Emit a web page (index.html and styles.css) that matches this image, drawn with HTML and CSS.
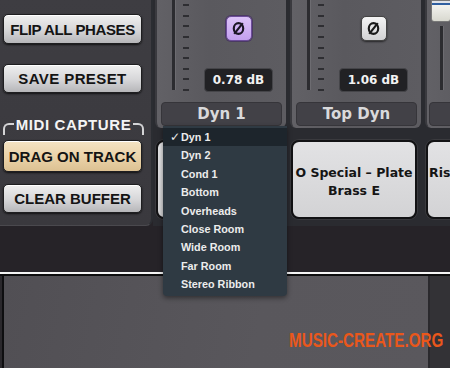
FILE: index.html
```html
<!DOCTYPE html>
<html>
<head>
<meta charset="utf-8">
<link rel="stylesheet" href="styles.css">
</head>
<body>
<div class="app">
  <div class="upper">
    <aside class="side">
      <div class="btn btn-flip">FLIP ALL PHASES</div>
      <div class="btn btn-save">SAVE PRESET</div>
      <div class="legend"><span class="lline lline-l"></span><span class="ltext">MIDI CAPTURE</span><span class="lline lline-r"></span></div>
      <div class="btn btn-drag">DRAG ON TRACK</div>
      <div class="btn btn-clear">CLEAR BUFFER</div>
    </aside>
    <div class="rack">
      <div class="strip">
        <div class="chan">
          <div class="chan-top">
            <div class="fader">
              <div class="track"></div>
              <div class="ticks"><i></i><i></i><i></i><i></i><i></i><i></i><i></i><i></i><i></i></div>
            </div>
            <div class="ctrls">
              <div class="phase phase-on"><svg viewBox="0 0 14 14" width="15" height="15"><ellipse cx="7" cy="7" rx="4.4" ry="5" fill="none" stroke="#1c1626" stroke-width="2"/><line x1="3" y1="12" x2="11" y2="2" stroke="#1c1626" stroke-width="2"/></svg></div>
              <div class="value">0.78 dB</div>
            </div>
          </div>
          <div class="name">Dyn 1</div>
        </div>
        <div class="card"></div>
      </div>
      <div class="strip">
        <div class="chan">
          <div class="chan-top">
            <div class="fader">
              <div class="track"></div>
              <div class="ticks"><i></i><i></i><i></i><i></i><i></i><i></i><i></i><i></i><i></i></div>
            </div>
            <div class="ctrls">
              <div class="phase phase-off"><svg viewBox="0 0 14 14" width="15" height="15"><ellipse cx="7" cy="7" rx="4.4" ry="5" fill="none" stroke="#1a1a1a" stroke-width="2"/><line x1="3" y1="12" x2="11" y2="2" stroke="#1a1a1a" stroke-width="2"/></svg></div>
              <div class="value">1.06 dB</div>
            </div>
          </div>
          <div class="name">Top Dyn</div>
        </div>
        <div class="card"><div class="card-text">O Special – Plate<br>Brass E</div></div>
      </div>
      <div class="strip">
        <div class="chan">
          <div class="chan-top">
            <div class="fader fader-3">
              <div class="track track-3"></div>
              <div class="knob"></div>
            </div>
          </div>
          <div class="name name-3"></div>
        </div>
        <div class="card"><div class="card-text card-text-3">Risi</div></div>
      </div>
    </div>
  </div>
  <div class="rule"></div>
  <div class="lower">
    <div class="edge"></div>
    <div class="pane"></div>
    <div class="rest"></div>
  </div>
</div>

<ul class="menu">
  <li class="sel"><span class="chk">✓</span>Dyn 1</li>
  <li>Dyn 2</li>
  <li>Cond 1</li>
  <li>Bottom</li>
  <li>Overheads</li>
  <li>Close Room</li>
  <li>Wide Room</li>
  <li>Far Room</li>
  <li>Stereo Ribbon</li>
</ul>

<div class="watermark">MUSIC-CREATE.ORG</div>
</body>
</html>
```

FILE: styles.css
```css
* { box-sizing: border-box; }
html, body { margin: 0; padding: 0; }
body {
  width: 450px;
  height: 368px;
  overflow: hidden;
  background: #262328;
  font-family: "Liberation Sans", Arial, sans-serif;
  position: relative;
}
.app { width: 450px; height: 368px; display: flex; flex-direction: column; }
.upper { height: 272px; display: flex; background: #262328; }

/* left side panel */
.side {
  width: 153px;
  height: 226px;
  flex: none;
  background: linear-gradient(#3e3d42, #3a393e);
  border-radius: 0 0 7px 0;
  border-right: 2px solid #2b2d32;
  border-bottom: 1px solid #4a494e;
  padding: 14px 0 0 3px;
  display: flex;
  flex-direction: column;
}
.btn {
  width: 139px;
  height: 30px;
  border: 1px solid #1e1e20;
  border-radius: 5px;
  background: linear-gradient(#efefef, #d6d6d8 55%, #b6b6b9);
  box-shadow: inset 0 1px 0 #fff, 0 1px 2px rgba(0,0,0,.7);
  color: #141414;
  font-weight: bold;
  font-size: 15px;
  display: flex;
  align-items: center;
  justify-content: center;
  white-space: nowrap;
}
.btn-flip { letter-spacing: -0.4px; }
.btn-save { margin-top: 20px; height: 29px; letter-spacing: 0.4px; }
.btn-drag {
  margin-top: 7px;
  height: 32px;
  background: linear-gradient(#f4e3c3, #ead2a8 55%, #dcc192);
}
.btn-clear { margin-top: 12px; height: 29px; }

.legend {
  margin-top: 23px;
  width: 141px;
  height: 17px;
  display: flex;
  align-items: flex-start;
}
.lline {
  flex: 1;
  margin-top: 7px;
  height: 12px;
  border-top: 2px solid #d4d4d6;
}
.lline-l { border-left: 2px solid #d4d4d6; border-top-left-radius: 6px; }
.lline-r { border-right: 2px solid #d4d4d6; border-top-right-radius: 6px; }
.ltext {
  color: #f4f4f4;
  font-weight: bold;
  font-size: 15px;
  letter-spacing: 0.6px;
  line-height: 17px;
  padding: 0 2px;
}

/* channel rack */
.rack {
  flex: 1;
  display: flex;
  gap: 4px;
  padding-left: 2px;
  overflow: hidden;
  background: #2a2b30;
  height: 226px;
}
.strip { width: 131px; flex: none; display: flex; flex-direction: column; }
.chan {
  height: 128px;
  background: linear-gradient(90deg, #626166, #5a595e 40%, #5d5c61);
  border-left: 2px solid #3a3a3f;
  border-radius: 0 0 6px 6px;
  display: flex;
  flex-direction: column;
}
.chan-top { height: 100px; display: flex; }
.fader { width: 34px; display: flex; padding-left: 15px; }
.track {
  width: 3px;
  height: 90px;
  background: #2c2c30;
  box-shadow: 1px 0 0 #6d6c71;
}
.ticks {
  margin-left: 8px;
  padding-top: 4px;
  height: 91px;
  display: flex;
  flex-direction: column;
  justify-content: space-between;
}
.ticks i { display: block; width: 6px; height: 2px; background: #2e2e32; }
.ctrls { width: 95px; display: flex; flex-direction: column; align-items: center; }
.phase {
  margin-top: 16px;
  width: 26px;
  height: 25px;
  border-radius: 5px;
  display: flex;
  align-items: center;
  justify-content: center;
}
.phase-on {
  background: linear-gradient(#dcc3f8, #c3a0ee);
  border: 1px solid #6d4d9a;
  box-shadow: 0 0 0 1px #4a3a62;
}
.phase-off {
  background: linear-gradient(#f4f4f4, #d2d2d4);
  border: 1px solid #444;
  box-shadow: 0 1px 2px rgba(0,0,0,.6);
}
.value {
  margin-top: 27px;
  width: 69px;
  height: 24px;
  border-radius: 4px;
  background: #212124;
  border: 1px solid #454549;
  color: #f2f2f2;
  font-family: "DejaVu Sans", sans-serif;
  font-weight: bold;
  font-size: 12px;
  display: flex;
  align-items: center;
  justify-content: center;
}
.name {
  margin: 2px 4px 0 4px;
  height: 24px;
  border-radius: 4px;
  background: #424147;
  border: 1px solid #36353a;
  color: #d9d9db;
  font-family: "DejaVu Sans", sans-serif;
  font-weight: bold;
  font-size: 15px;
  display: flex;
  align-items: center;
  justify-content: center;
}
.fader-3 { position: relative; padding-left: 13px; }
.track-3 { margin-top: 26px; height: 64px; }
.knob {
  position: absolute;
  left: 4px;
  top: 0;
  width: 20px;
  height: 22px;
  border-radius: 0 0 3px 3px;
  background: linear-gradient(#dfe2e8 0, #dfe2e8 2px, #2f5fa0 2px, #2f5fa0 4px, #f2f2ee 4px, #d8d8cf);
  border: 1px solid #777;
}
.name-3 { margin-left: 2px; }

.card {
  margin: 12px 0 0 1px;
  width: 126px;
  height: 79px;
  border-radius: 8px;
  background: linear-gradient(#e2e2e4, #d3d3d5);
  border: 2px solid #121214;
  box-shadow: 0 0 0 1px #3a3a3e;
  overflow: hidden;
  display: flex;
  align-items: center;
  justify-content: center;
}
.card-text {
  color: #151515;
  font-family: "DejaVu Sans", sans-serif;
  font-weight: bold;
  font-size: 12.5px;
  line-height: 18px;
  text-align: center;
  white-space: nowrap;
  margin-top: 4px;
}
.card-text-3 { align-self: center; margin-right: auto; margin-left: 1px; margin-top: -14px; }

/* divider and lower area */
.rule { height: 4px; background: #f4f4f4; border-bottom: 2px solid #0d0d0e; }
.lower { flex: 1; display: flex; }
.edge { width: 4px; background: #2a282c; border-right: 2px solid #0e0e10; }
.pane { width: 424px; background: linear-gradient(100deg, #514f54, #59575c 60%, #5a585d); }
.rest { flex: 1; background: #333236; border-left: 2px solid #2a292d; }

/* dropdown menu */
.menu {
  position: absolute;
  left: 163px;
  top: 126px;
  width: 124px;
  margin: 0;
  padding: 2px 0 2px 0;
  list-style: none;
  background: #2f3a43;
  border-radius: 0 0 4px 4px;
  box-shadow: 0 2px 5px rgba(0,0,0,.45);
}
.menu li {
  height: 18.4px;
  line-height: 18.4px;
  padding-left: 18px;
  position: relative;
  color: #ececec;
  font-weight: bold;
  font-size: 10.8px;
  white-space: nowrap;
}
.menu li.sel { background: #1d252c; }
.chk {
  position: absolute;
  left: 7px;
  top: 0;
  font-family: "DejaVu Sans", sans-serif;
  font-weight: bold;
  font-size: 12px;
}

.watermark {
  position: absolute;
  left: 289px;
  top: 329px;
  color: #ea571b;
  font-weight: bold;
  font-size: 20px;
  line-height: 22px;
  white-space: nowrap;
  transform: scaleX(0.76);
  transform-origin: left top;
}
```
